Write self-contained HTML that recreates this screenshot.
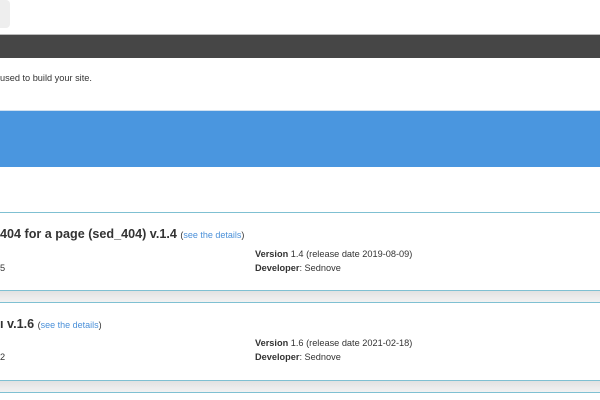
<!DOCTYPE html>
<html><head><style>
body{margin:0;width:600px;height:400px;overflow:hidden;background:#fff;font-family:"Liberation Sans",sans-serif;color:#333;position:relative}
.a{position:absolute}
.t{font-size:9.2px;white-space:nowrap}
b{font-weight:bold}
.lnk{color:#4a90d9}
.band{position:absolute;left:0;width:600px;background:linear-gradient(#e2e2e2,#f2f2f2)}
.ln{position:absolute;left:0;width:600px;height:1px;background:#7fc0d2}
</style></head><body>
<div class="a" style="left:-6px;top:0;width:16px;height:28px;background:#eeeeee;border-radius:4px"></div>
<div class="a" style="left:0;top:34px;width:600px;height:1px;background:#bbb"></div>
<div class="a" style="left:0;top:35px;width:600px;height:23px;background:#464646"></div>
<div class="a t" style="left:0;top:73px">used to build your site.</div>
<div class="a" style="left:0;top:110px;width:600px;height:1px;background:#cfe0f0"></div>
<div class="a" style="left:0;top:111px;width:600px;height:56px;background:#4a96df"></div>

<div class="ln" style="top:212px"></div>
<div class="a" style="left:0;top:227px;font-size:12.6px;font-weight:bold;white-space:nowrap">404 for a page (sed_404) v.1.4 <span style="font-size:9px;font-weight:normal">(<span class="lnk">see the details</span>)</span></div>
<div class="a t" style="left:255px;top:249px"><b>Version</b> 1.4 (release date 2019-08-09)</div>
<div class="a t" style="left:255px;top:263px"><b>Developer</b>: Sednove</div>
<div class="a t" style="left:0;top:263px">5</div>
<div class="ln" style="top:290px"></div>
<div class="band" style="top:291px;height:11px"></div>
<div class="ln" style="top:302px"></div>

<div class="a" style="left:0;top:317px;font-size:12.6px;font-weight:bold;white-space:nowrap">ı v.1.6 <span style="font-size:9px;font-weight:normal">(<span class="lnk">see the details</span>)</span></div>
<div class="a t" style="left:255px;top:338px"><b>Version</b> 1.6 (release date 2021-02-18)</div>
<div class="a t" style="left:255px;top:352px"><b>Developer</b>: Sednove</div>
<div class="a t" style="left:0;top:352px">2</div>
<div class="ln" style="top:380px"></div>
<div class="band" style="top:381px;height:11px"></div>
<div class="ln" style="top:392px"></div>
</body></html>
